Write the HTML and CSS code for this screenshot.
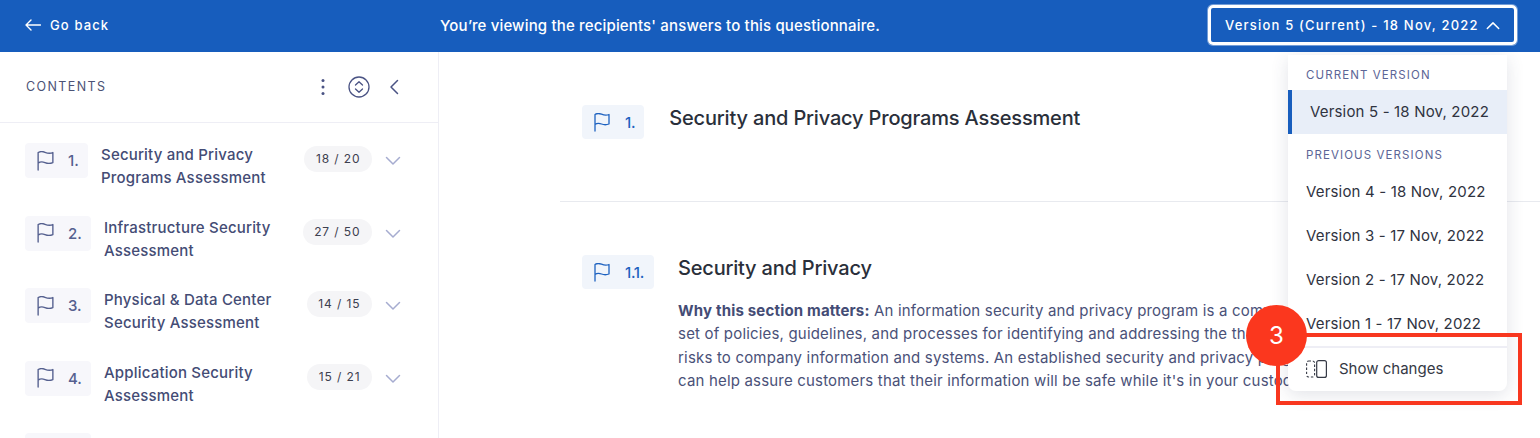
FILE: index.html
```html
<!DOCTYPE html>
<html lang="en">
<head>
<meta charset="utf-8">
<title>Questionnaire</title>
<link rel="stylesheet" href="styles.css">
</head>
<body>
<svg class="defs" width="0" height="0" aria-hidden="true"><defs>
<symbol id="flag" viewBox="1 1 16 19"><path d="M2 19V2.500C4 1.200 6 1.200 8.500 2.200S13.500 3.500 16 2.500V12C13.500 13 11 13 8.500 12S4 11 2 12.500" fill="none" stroke="currentColor" stroke-width="1.300" stroke-linecap="round" stroke-linejoin="round"/></symbol>
<symbol id="chev" viewBox="0 0 16 10"><path d="M1.500 1.500L8 8L14.500 1.500" fill="none" stroke="currentColor" stroke-width="1.500" stroke-linecap="round" stroke-linejoin="round"/></symbol>
</defs></svg>
<header class="topbar">
  <a class="back">
    <svg class="back-icon" viewBox="0 0 16 12"><path d="M15.500 6H1M6 1L1 6L6 11" fill="none" stroke="currentColor" stroke-width="1.400" stroke-linecap="round" stroke-linejoin="round"/></svg>
    <span>Go back</span>
  </a>
  <div class="notice">You’re viewing the recipients' answers to this questionnaire.</div>
  <button class="version-btn">
    <span>Version 5 (Current) - 18 Nov, 2022</span>
    <svg class="up" viewBox="0 0 16 10"><path d="M1.500 8.500L8 2L14.500 8.500" fill="none" stroke="currentColor" stroke-width="1.700" stroke-linecap="round" stroke-linejoin="round"/></svg>
  </button>
</header>
<div class="body">
  <aside class="sidebar">
    <div class="side-head">
      <span class="side-title">CONTENTS</span>
      <div class="side-tools">
        <svg class="dots" viewBox="0 0 4 18"><circle cx="2" cy="2.500" r="1.500"/><circle cx="2" cy="9" r="1.500"/><circle cx="2" cy="15.500" r="1.500"/></svg>
        <svg class="expand" viewBox="0 0 22 22"><circle cx="11" cy="11" r="10" fill="none" stroke="currentColor" stroke-width="1.300"/><path d="M7.500 9L11 5.700L14.500 9M7.500 13L11 16.300L14.500 13" fill="none" stroke="currentColor" stroke-width="1.300" stroke-linecap="round" stroke-linejoin="round"/></svg>
        <svg class="collapse" viewBox="0 0 10 16"><path d="M8.500 1.500L2 8L8.500 14.500" fill="none" stroke="currentColor" stroke-width="1.500" stroke-linecap="round" stroke-linejoin="round"/></svg>
      </div>
    </div>
    <ul class="toc">
      <li class="toc-item">
        <span class="toc-tag narrow"><svg class="flag"><use href="#flag"/></svg><b>1.</b></span>
        <span class="toc-name first">Security and Privacy<br>Programs Assessment</span>
        <span class="pill">18 / 20</span>
        <svg class="chev"><use href="#chev"/></svg>
      </li>
      <li class="toc-item">
        <span class="toc-tag"><svg class="flag"><use href="#flag"/></svg><b>2.</b></span>
        <span class="toc-name">Infrastructure Security<br>Assessment</span>
        <span class="pill">27 / 50</span>
        <svg class="chev"><use href="#chev"/></svg>
      </li>
      <li class="toc-item">
        <span class="toc-tag"><svg class="flag"><use href="#flag"/></svg><b>3.</b></span>
        <span class="toc-name">Physical &amp; Data Center<br>Security Assessment</span>
        <span class="pill">14 / 15</span>
        <svg class="chev"><use href="#chev"/></svg>
      </li>
      <li class="toc-item">
        <span class="toc-tag"><svg class="flag"><use href="#flag"/></svg><b>4.</b></span>
        <span class="toc-name">Application Security<br>Assessment</span>
        <span class="pill">15 / 21</span>
        <svg class="chev"><use href="#chev"/></svg>
      </li>
      <li class="toc-item">
        <span class="toc-tag"></span>
      </li>
    </ul>
  </aside>
  <main class="main">
    <section class="sec-top">
      <span class="tag tag-top"><svg class="flag"><use href="#flag"/></svg><b>1.</b></span>
      <h1 class="h-top">Security and Privacy Programs Assessment</h1>
    </section>
    <section class="sec-sub">
      <span class="tag"><svg class="flag"><use href="#flag"/></svg><b>1.1.</b></span>
      <div class="sub-body">
        <h2 class="h-sub">Security and Privacy</h2>
        <p class="para"><strong>Why this section matters:</strong> An information security and privacy program is a comprehensive<br>set of policies, guidelines, and processes for identifying and addressing the threats and<br>risks to company information and systems. An established security and privacy program<br>can help assure customers that their information will be safe while it's in your custody.</p>
      </div>
    </section>
  </main>
</div>
<div class="menu">
  <div class="menu-label">CURRENT VERSION</div>
  <div class="menu-item current">Version 5 - 18 Nov, 2022</div>
  <div class="menu-label prev">PREVIOUS VERSIONS</div>
  <div class="menu-item">Version 4 - 18 Nov, 2022</div>
  <div class="menu-item">Version 3 - 17 Nov, 2022</div>
  <div class="menu-item">Version 2 - 17 Nov, 2022</div>
  <div class="menu-item">Version 1 - 17 Nov, 2022</div>
  <div class="menu-foot">
    <svg class="changes" viewBox="0 0 21 18"><rect x="0.600" y="1" width="8" height="16" rx="2" fill="none" stroke="currentColor" stroke-width="1.100" stroke-dasharray="2.400 1.800"/><rect x="10.700" y="0.600" width="9.700" height="16.800" rx="2" fill="none" stroke="currentColor" stroke-width="1.200"/></svg>
    <span>Show changes</span>
  </div>
</div>
<div class="callout-box"></div>
<div class="callout-badge">3</div>
</body>
</html>
```
FILE: styles.css
```css
* { box-sizing: border-box; }
html, body { margin: 0; padding: 0; }
body {
  width: 1540px;
  height: 438px;
  overflow: hidden;
  background: #fff;
  font-family: Inter, "Liberation Sans", sans-serif;
  position: relative;
}
.defs { position: absolute; }
.topbar {
  height: 52px;
  background: #175dbd;
  color: #fff;
  display: flex;
  align-items: center;
  padding: 0 23px 2px 25px;
}
.back { display: flex; align-items: center; gap: 9px; width: 415px; font-size: 13px; font-weight: 500; letter-spacing: 1.120px; }
.back-icon { width: 16px; height: 12px; }
.notice { flex: 1; font-size: 15px; font-weight: 500; letter-spacing: 0.160px; }
.version-btn {
  width: 309px;
  height: 40px;
  border: 3px solid #fff;
  box-shadow: 0 0 0 1px rgba(255,255,255,.4);
  border-radius: 5px;
  background: transparent;
  color: #fff;
  display: flex;
  align-items: center;
  padding: 0 14px;
  justify-content: space-between;
  font-family: inherit;
  font-size: 13px;
  font-weight: 500;
  letter-spacing: 1.200px;
}
.up { width: 14px; height: 9px; }
.body { display: flex; height: 386px; overflow: hidden; }
.sidebar { width: 439px; flex: none; border-right: 1px solid #eeeef5; }
.side-head {
  height: 71px;
  border-bottom: 1px solid #eeeef5;
  display: flex;
  align-items: center;
  justify-content: space-between;
  padding: 0 39px 0 26px;
  color: #4a5384;
}
.side-title { font-size: 12.500px; letter-spacing: 1.400px; color: #4b5275; margin-bottom: 2px; }
.side-tools { display: flex; align-items: center; }
.dots { width: 4px; height: 18px; fill: #4a5384; margin-right: 23px; }
.expand { width: 22px; height: 22px; margin-right: 19px; }
.collapse { width: 10px; height: 16px; }
.toc { list-style: none; margin: 0; padding: 20px 0 0 25px; }
.toc-item { height: 72.500px; display: flex; align-items: flex-start; position: relative; }
.toc-tag {
  width: 66px;
  height: 35px;
  flex: none;
  background: #f7f7fb;
  border-radius: 4px;
  display: flex;
  align-items: center;
  padding-left: 12px;
  color: #55608f;
}
.toc-tag.narrow { width: 63px; }
.toc-tag .flag { width: 17px; height: 20px; margin-right: 14px; color: #55608f; }
.toc-tag b { font-size: 15px; font-weight: 500; }
.toc-name {
  margin: 0 0 0 13px;
  font-size: 15px;
  line-height: 23px;
  font-weight: 500;
  letter-spacing: 0.190px;
  color: #444c75;
  width: 199px;
  flex: none;
  white-space: nowrap;
}
.pill {
  margin-top: 3px;
  height: 26px;
  padding: 0 11.500px;
  border-radius: 13px;
  background: #f5f5f7;
  font-size: 12px;
  letter-spacing: 0.9px;
  line-height: 26px;
  color: #3d4050;
  position: absolute;
  right: 66px;
  white-space: nowrap;
}
.chev { width: 16px; height: 10px; position: absolute; right: 37px; top: 13px; color: #a6acd0; }
.main { flex: 1; padding: 53px 0 0 121px; overflow: hidden; color: #2a2f3a; }
.sec-top {
  display: flex;
  align-items: flex-start;
  height: 97px;
  padding-left: 22px;
  border-bottom: 1px solid #e8eaef;
}
.tag {
  height: 34px;
  flex: none;
  background: #f1f5fb;
  border-radius: 4px;
  display: flex;
  align-items: center;
  padding: 0 10px 0 12px;
  color: #1e62c0;
}
.tag-top { padding-right: 9px; }
.tag .flag { width: 16px; height: 19px; margin-right: 15px; }
.tag b { font-size: 15px; font-weight: 500; letter-spacing: -0.3px; }
.h-top { margin: 1px 0 0 25px; font-size: 20px; line-height: 24px; font-weight: 500; letter-spacing: -0.170px; white-space: nowrap; color: #2a2f3a; }
.sec-sub { display: flex; align-items: flex-start; padding: 53px 0 0 22px; }
.sub-body { margin-left: 24px; }
.h-sub { margin: 1px 0 19px; font-size: 20px; line-height: 24px; font-weight: 500; letter-spacing: -0.200px; color: #2a2f3a; white-space: nowrap; }
.para { margin: 0; font-size: 15px; line-height: 23.400px; letter-spacing: 0.180px; color: #4a5178; white-space: nowrap; }
.para strong { font-weight: 700; color: #444c75; }
.menu {
  position: absolute;
  left: 1288px;
  top: 55px;
  width: 219px;
  height: 336px;
  background: #fff;
  border-radius: 0 0 8px 8px;
  box-shadow: 0 4px 18px rgba(50,55,90,.14);
}
.menu-label { font-size: 11.500px; letter-spacing: 1.100px; color: #5c6596; padding: 14px 0 0 18px; height: 35px; line-height: 13px; }
.menu-label.prev { height: 36px; padding-top: 15px; }
.menu-item { height: 44px; line-height: 44px; padding-left: 18px; font-size: 15px; letter-spacing: 0.170px; color: #2f333f; white-space: nowrap; }
.menu-item.current { background: #e8eef8; border-left: 4px solid #175dbd; padding-left: 18px; }
.menu-foot {
  height: 45px;
  border-top: 2px solid #eeeef5;
  display: flex;
  align-items: center;
  padding: 0 0 2px 18px;
  font-size: 15px;
  color: #353945;
  gap: 12px;
}
.changes { width: 21px; height: 18px; }
.callout-box { position: absolute; left: 1276px; top: 333px; width: 246px; height: 72px; border: 4px solid #f8371f; }
.callout-badge {
  position: absolute;
  left: 1246px;
  top: 305px;
  width: 61px;
  height: 61px;
  border-radius: 50%;
  background: #fb371e;
  color: #fff;
  font-size: 24px;
  display: flex;
  align-items: center;
  justify-content: center;
}
```
